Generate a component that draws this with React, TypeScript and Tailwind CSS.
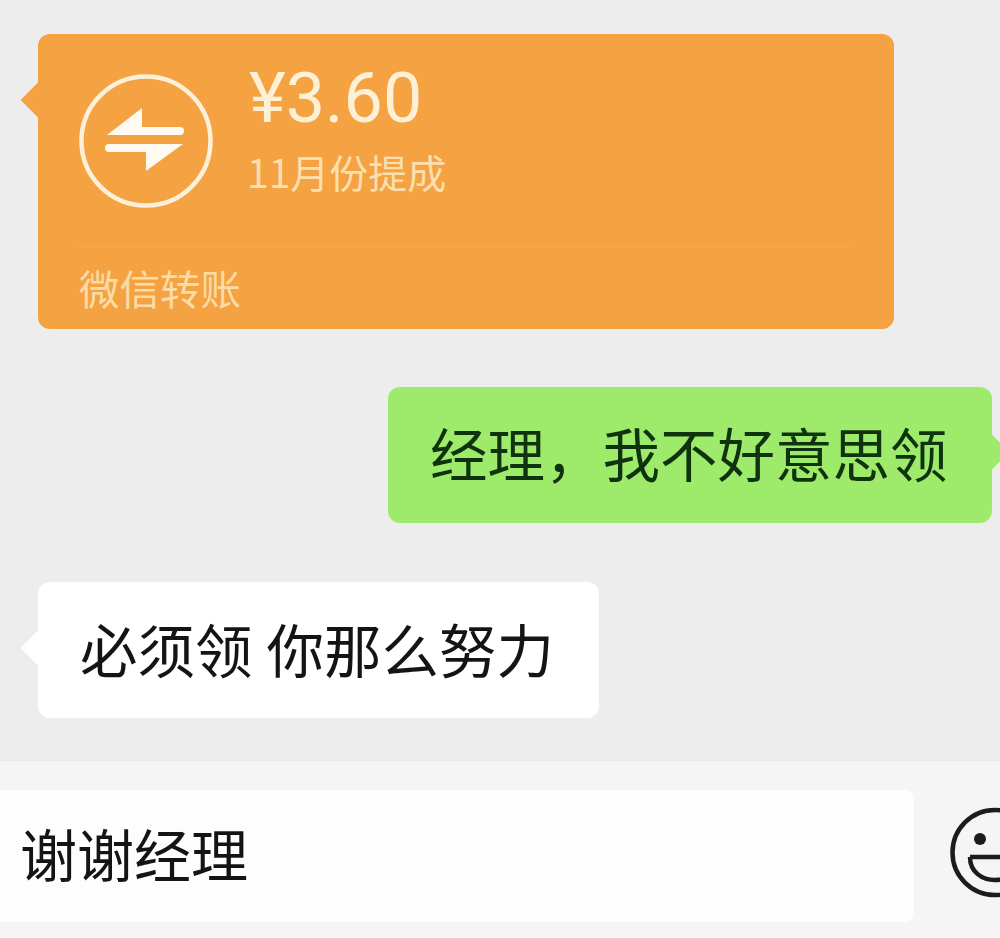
export default function App() {
  const cjk = "font-['Noto_Sans_CJK_SC','Noto_Sans',sans-serif]";
  return (
    <div className={`h-[938px] w-[1000px] overflow-hidden bg-[#ededed] flex flex-col ${cjk}`}>
      <div className="flex-1 flex flex-col pt-[34px] px-[8px]">
        <div className="relative ml-[30px] w-[856px] h-[295px] rounded-[12px] bg-[#f5a243] flex flex-col">
          <div className="absolute left-[-12px] top-[53px] w-[26px] h-[26px] rotate-45 bg-[#f5a243]" />
          <div className="relative flex items-start pl-[41px] pt-[40px] h-[212px]">
            <svg width="134" height="134" viewBox="0 0 134 134" className="shrink-0">
              <circle cx="67" cy="67" r="64.5" fill="none" stroke="#fdf0d9" strokeWidth="4.5" />
              <path d="M63 34 L28 61 L101 61 Q105 61 105 57 Q105 53 101 53 L63 53 Z" fill="#fffaf0" />
              <path d="M67 97 L104 70 L30 70 Q26 70 26 74 Q26 78 30 78 L67 78 Z" fill="#fffaf0" />
            </svg>
            <div className="ml-[36px] flex flex-col text-[#fdeccb]">
              <div className="font-['Roboto',sans-serif] text-[70px] leading-[62px] mt-[-7px] text-[#fdf0d5]">¥3.60</div>
              <div className="text-[39px] leading-[48px] mt-[18px] text-[#fbdfae] ml-[-2px]">11月份提成</div>
            </div>
          </div>
          <div className="mx-[41px] border-t border-[#f7ab50]" />
          <div className="pl-[41px] mt-[16px] text-[40.5px] leading-[50px] text-[#fbdba6]">微信转账</div>
        </div>

        <div className="flex justify-end mt-[58px]">
          <div className="relative w-[604px] h-[136px] rounded-[12px] bg-[#9eea6a] flex items-center pl-[42px] text-[57.5px] leading-none text-[#0f330f]">
            <div className="absolute right-[-12px] top-[52px] w-[26px] h-[26px] rotate-45 bg-[#9eea6a]" />
            <span className="relative whitespace-nowrap mt-[-4px]">{"经理\uFF0C我不好意思领"}</span>
          </div>
        </div>

        <div className="relative ml-[30px] mt-[59px] w-[561px] h-[136px] rounded-[12px] bg-white flex items-center pl-[42px] text-[57.5px] leading-none text-[#141414]">
          <div className="absolute left-[-12px] top-[53px] w-[26px] h-[26px] rotate-45 bg-white" />
          <span className="relative whitespace-nowrap mt-[-2px] [word-spacing:1px]">必须领 你那么努力</span>
        </div>
      </div>

      <div className="h-[178px] bg-[#f5f5f6] border-t border-[#e8e8e8] flex items-start pt-[29px] shrink-0">
        <div className="w-[914px] h-[132px] bg-[#fdfdfd] rounded-r-[8px] flex items-center pl-[20px] text-[57px] leading-none text-[#141414] shrink-0">
          <span className="mt-[-8px]">谢谢经理</span>
        </div>
        <svg width="86" height="94" viewBox="0 0 86 94" className="ml-[36px] mt-[16px] shrink-0 overflow-visible">
          <circle cx="45" cy="46.5" r="42.5" fill="none" stroke="#1c1c1c" strokeWidth="4.5" />
          <circle cx="30" cy="33" r="6" fill="#1c1c1c" />
          <path d="M20 51 H70 M20 51 C20 66 32 74 45 74 C58 74 70 66 70 51" fill="none" stroke="#1c1c1c" strokeWidth="4.5" />
        </svg>
      </div>
    </div>
  );
}
